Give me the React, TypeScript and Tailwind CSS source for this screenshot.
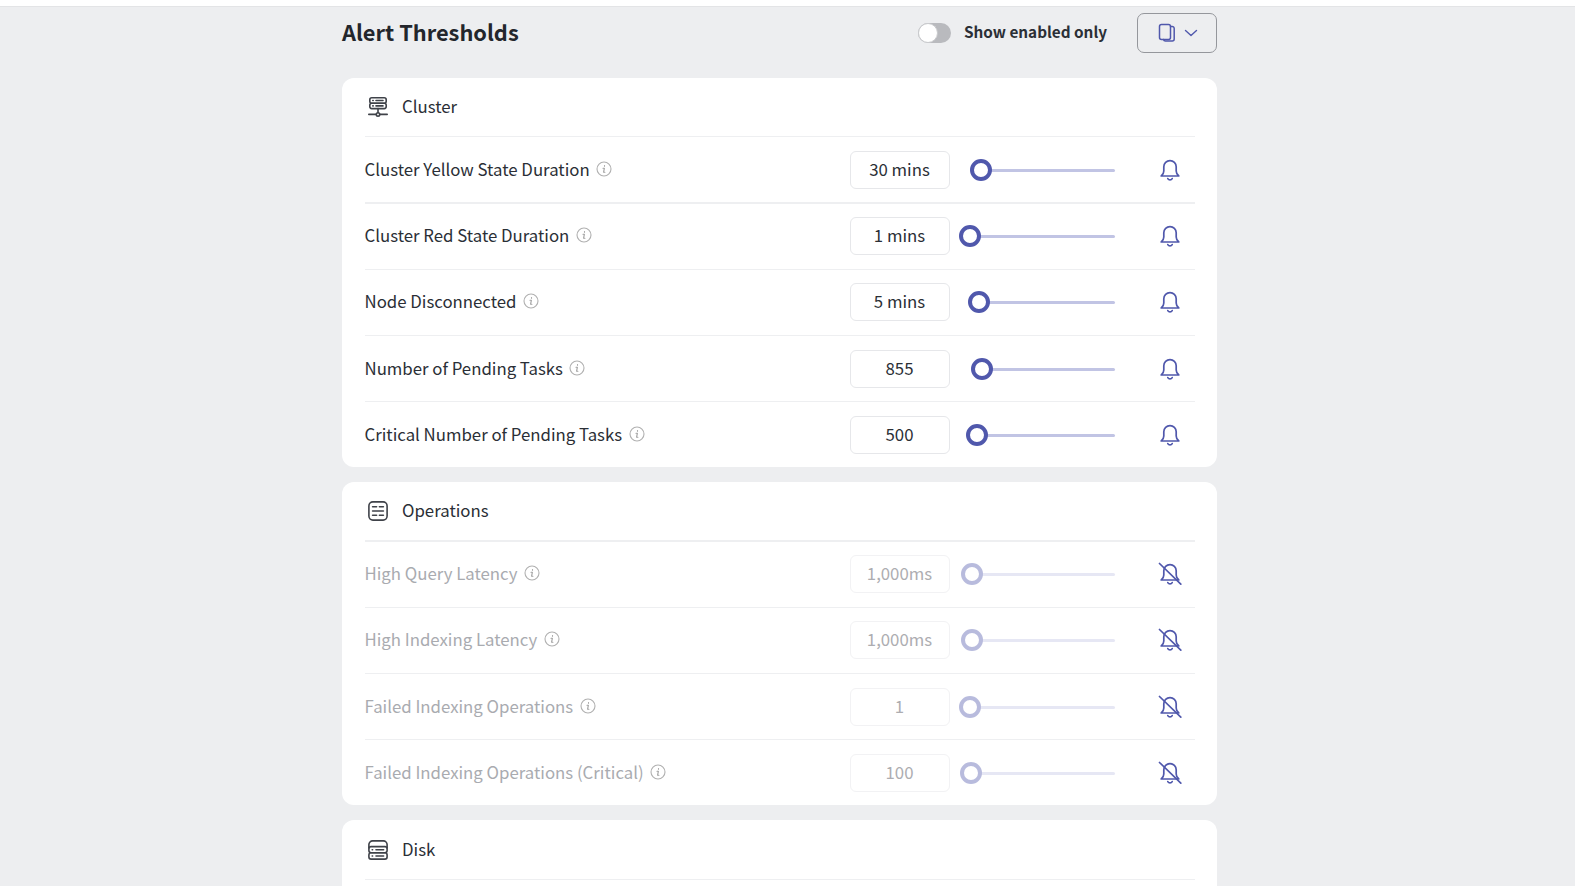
import React from "react";

const FONT = "font-['Noto_Sans_CJK_SC','Noto_Sans',sans-serif]";

function Info() {
  return (
    <svg width="16" height="16" viewBox="0 0 16 16" fill="none" className="shrink-0">
      <circle cx="8" cy="8" r="7" stroke="#b0b0b0" strokeWidth="1.1" />
      <path d="M8.5 4.5v.7M7 7.2h1.4L7.6 11.2h1.3" stroke="#a0a0a0" strokeWidth="1.1" strokeLinecap="round" strokeLinejoin="round" />
    </svg>
  );
}

function Bell({ off }: { off?: boolean }) {
  return (
    <svg width="24" height="24" viewBox="0 0 24 24" fill="none" stroke="#5058ac" strokeWidth="1.7" strokeLinecap="round" strokeLinejoin="round">
      <path d="M3.2 18c1.7-1.2 2.6-2.8 2.6-5V8.8a6.2 6.2 0 0 1 12.4 0V13c0 2.2.9 3.8 2.6 5H3.2Z" />
      <path d="M9.8 20.6c.5.9 1.2 1.3 2.2 1.3s1.7-.4 2.2-1.3" />
      {off ? <path d="M1.5 1.5 22.8 22.2" /> : null}
    </svg>
  );
}

function ClusterIcon() {
  return (
    <svg width="20" height="20" viewBox="0 0 20 20" fill="none" stroke="#3f4249" strokeWidth="1.6" strokeLinecap="round" strokeLinejoin="round">
      <rect x="1.8" y="0.8" width="16.4" height="5.4" rx="2" />
      <rect x="1.8" y="6.2" width="16.4" height="5.4" rx="2" />
      <path d="M4.8 3.5h.4M4.8 8.9h.4M8 3.5h7M8 8.9h7" />
      <path d="M10 11.6v4M0.8 17.4h7.4M11.8 17.4h7.4" />
      <circle cx="10" cy="17.4" r="1.7" />
    </svg>
  );
}

function OpsIcon() {
  return (
    <svg width="20" height="20" viewBox="0 0 20 20" fill="none" stroke="#3f4249" strokeWidth="1.6" strokeLinecap="round" strokeLinejoin="round">
      <rect x="0.9" y="0.9" width="18.2" height="18.2" rx="4" />
      <path d="M4.6 5.8h4M11.4 5.8h4M4.6 10h10.8M4.6 14.2h4M11.4 14.2h4" />
    </svg>
  );
}

function DiskIcon() {
  return (
    <svg width="20" height="20" viewBox="0 0 20 20" fill="none" stroke="#3f4249" strokeWidth="1.6" strokeLinecap="round" strokeLinejoin="round">
      <path d="M0.9 8V4.6a3.7 3.7 0 0 1 3.7-3.7h10.8a3.7 3.7 0 0 1 3.7 3.7V8" />
      <rect x="0.9" y="6.6" width="18.2" height="6.2" rx="2.2" />
      <rect x="0.9" y="12.8" width="18.2" height="6.3" rx="2.2" />
      <path d="M4.2 9.7h.4M4.2 16h.4M8 9.7h7.6M8 16h7.6" />
    </svg>
  );
}

type Row = { label: string; value: string; thumb: number; cls: string };

const ROW = "h-[66px] border-t";
const ROW_UP = "h-[66px] border-t pb-[2px]";

function Slider({ thumb, disabled }: { thumb: number; disabled?: boolean }) {
  return (
    <div className={`relative ml-[10px] h-[22px] w-[155px] ${disabled ? "opacity-40" : ""}`}>
      <div className="absolute right-0 top-[10px] h-[3px] rounded-full bg-[#c1c4e4]" style={{ left: thumb }} />
      <div
        className="absolute top-0 h-[22px] w-[22px] rounded-full border-[4px] border-[#5058ac] bg-white"
        style={{ left: thumb - 11 }}
      />
    </div>
  );
}

function SettingRow({ row, disabled }: { row: Row; disabled?: boolean }) {
  return (
    <div className={`flex items-center border-[#eeeff1] ${row.cls}`}>
      <div className="flex min-w-0 flex-1 items-center gap-[6.5px]">
        <span className={`text-[16.8px] leading-none ${disabled ? "text-[#a9abb0]" : "text-[#2b2f36]"}`}>{row.label}</span>
        <Info />
      </div>
      <div
        className={`flex h-[38px] w-[100px] items-center justify-center rounded-[6px] border pr-[1px] text-[16.8px] leading-none ${
          disabled ? "border-[#f2f2f4] text-[#adadb1]" : "border-[#e6e7ea] text-[#2b2f36]"
        }`}
      >
        {row.value}
      </div>
      <Slider thumb={row.thumb} disabled={disabled} />
      <div className="ml-[43px] mr-[13px] flex w-[24px] justify-center">
        <Bell off={disabled} />
      </div>
    </div>
  );
}

function Section({
  icon,
  title,
  rows,
  disabled,
  headCls,
  tail,
}: {
  icon: React.ReactNode;
  title: string;
  rows: Row[];
  disabled?: boolean;
  headCls: string;
  tail?: boolean;
}) {
  return (
    <section className={`rounded-[12px] bg-white pl-[22.5px] pr-[22px] ${tail ? "pb-[66px]" : ""}`}>
      <div className={`flex items-center gap-[14.5px] pl-[3px] border-[#eeeff1] ${headCls}`}>
        <div className="flex w-[20px] justify-center">{icon}</div>
        <span className="pb-[1px] text-[16.8px] leading-none text-[#2b2f36]">{title}</span>
      </div>
      {rows.map((r) => (
        <SettingRow key={r.label} row={r} disabled={disabled} />
      ))}
    </section>
  );
}

const cluster: Row[] = [
  { label: "Cluster Yellow State Duration", value: "30 mins", thumb: 21, cls: "h-[65px]" },
  { label: "Cluster Red State Duration", value: "1 mins", thumb: 10, cls: "h-[67px] border-t-2 pb-[2px]" },
  { label: "Node Disconnected", value: "5 mins", thumb: 19, cls: ROW_UP },
  { label: "Number of Pending Tasks", value: "855", thumb: 22, cls: ROW },
  { label: "Critical Number of Pending Tasks", value: "500", thumb: 17, cls: ROW },
];

const operations: Row[] = [
  { label: "High Query Latency", value: "1,000ms", thumb: 12, cls: "h-[65px] pb-[2px]" },
  { label: "High Indexing Latency", value: "1,000ms", thumb: 12, cls: ROW_UP },
  { label: "Failed Indexing Operations", value: "1", thumb: 10, cls: ROW },
  { label: "Failed Indexing Operations (Critical)", value: "100", thumb: 11, cls: ROW },
];

export default function App() {
  return (
    <div className={`${FONT} h-[886px] overflow-hidden bg-[#edeef0]`}>
      <div className="h-[7px] border-b border-[#e3e4e6] bg-white" />
      <div className="pr-[16px]">
        <main className="mx-auto w-[875px]">
          <header className="flex h-[52px] items-center pb-[3px]">
            <h1 className="flex-1 text-[21.8px] font-semibold leading-none text-[#23262c]">Alert Thresholds</h1>
            <div className="relative mt-[2px] h-[20px] w-[33px] rounded-full bg-[#b9babe]">
              <div className="absolute left-0 top-0 h-[20px] w-[20px] rounded-full border border-[#c9cacd] bg-white" />
            </div>
            <span className="ml-[13px] mr-[30px] mt-[1px] text-[15.3px] font-semibold leading-none text-[#2b2f36]">Show enabled only</span>
            <button className="mt-[3px] flex h-[40px] w-[80px] items-center justify-center gap-[7px] rounded-[7px] border border-[#95979c]">
              <svg width="20" height="20" viewBox="0 0 20 20" fill="none" stroke="#5058ac" strokeWidth="1.5" strokeLinejoin="round" strokeLinecap="round">
                <path d="M13.5 3.5h1.7a2 2 0 0 1 2 2v10.5a2 2 0 0 1-2 2H8.5a2 2 0 0 1-2-1.6" />
                <rect x="2.5" y="1.5" width="11" height="15" rx="2" />
              </svg>
              <svg width="14" height="14" viewBox="0 0 14 14" fill="none" stroke="#5058ac" strokeWidth="1.4" strokeLinecap="round" strokeLinejoin="round">
                <path d="M1.5 4.5 7 9.5l5.5-5" />
              </svg>
            </button>
          </header>
          <div className="mt-[19px] flex flex-col gap-[15px]">
            <Section icon={<ClusterIcon />} title="Cluster" rows={cluster} headCls="h-[59px] border-b" />
            <Section icon={<OpsIcon />} title="Operations" rows={operations} disabled headCls="h-[60px] border-b-2" />
            <Section icon={<DiskIcon />} title="Disk" rows={[]} headCls="h-[60px] border-b" tail />
          </div>
        </main>
      </div>
    </div>
  );
}
